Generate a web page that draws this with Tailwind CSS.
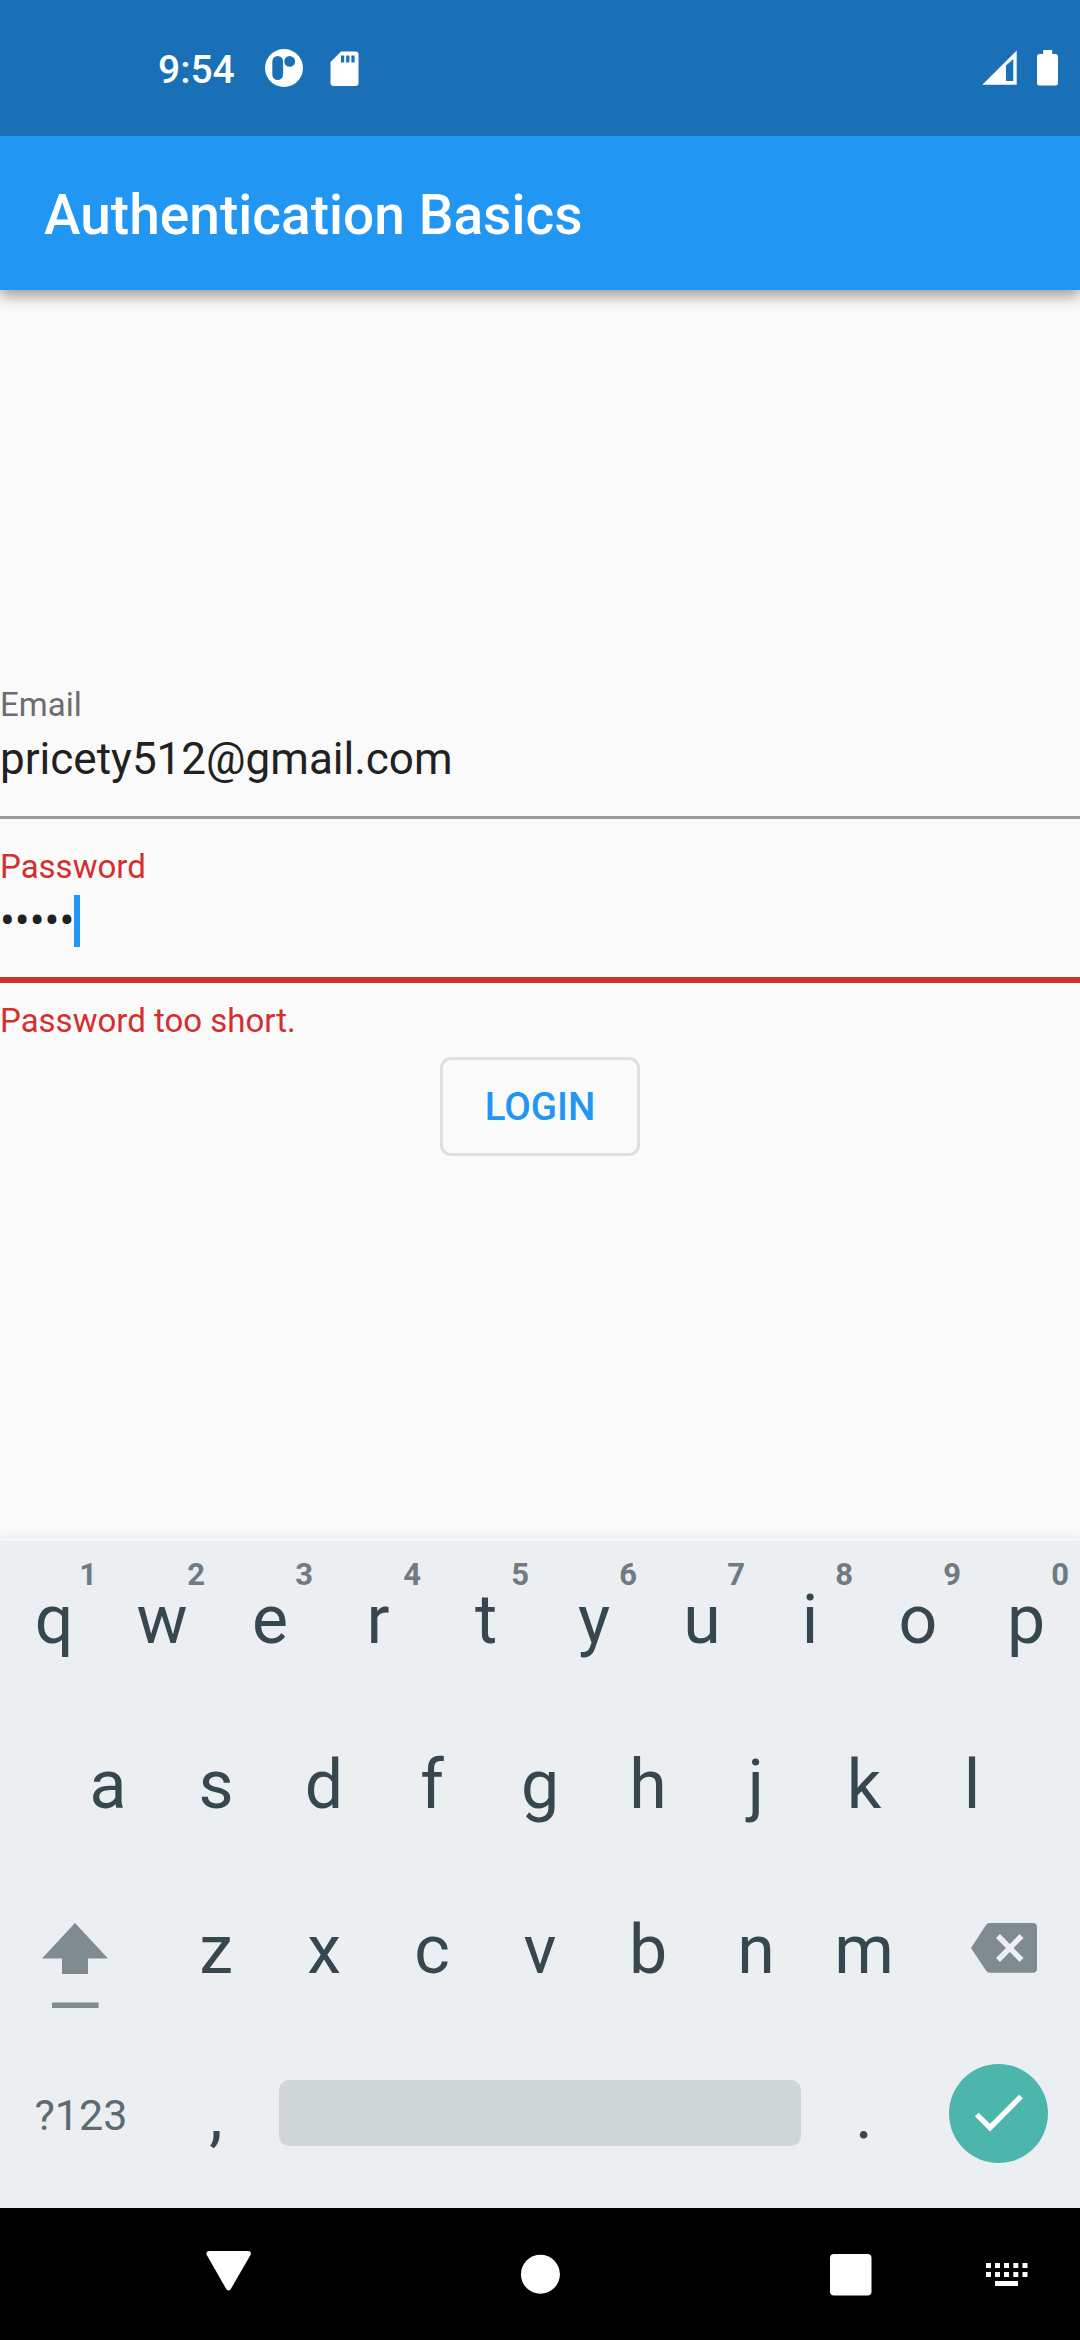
<!DOCTYPE html>
<html lang="en">
<head>
<meta charset="utf-8">
<title>Authentication Basics</title>
<script src="https://cdn.jsdelivr.net/npm/@tailwindcss/browser@4"></script>
</head>
<body class="w-[1080px] h-[2340px] flex flex-col overflow-hidden bg-[#fafafa] font-['Roboto',sans-serif]">
  <!-- Status bar -->
  <header class="relative z-10 h-[136px] shrink-0 bg-[#1a70b6] flex items-center text-white">
    <span class="ml-[158px] mt-[4px] w-[106px] text-[39px] leading-[46px] font-medium">9:54</span>
    <svg class="w-[40px] h-[40px]" viewBox="0 0 40 40"><path fill="#fff" fill-rule="evenodd" d="M20 1a19 19 0 1 1 0 38a19 19 0 1 1 0-38zM13.700 8a5.400 5.400 0 0 0-5.400 5.400v13.200a5.400 5.400 0 0 0 10.800 0V13.400A5.400 5.400 0 0 0 13.700 8zM25.700 8a5.400 5.400 0 1 0 0 10.800a5.400 5.400 0 1 0 0-10.800z"/></svg>
    <svg class="ml-[26px] mt-px w-[30px] h-[36px]" viewBox="0 0 30 36"><path fill="#fff" fill-rule="evenodd" d="M11 .5H25.500a3 3 0 0 1 3 3v28.500a3 3 0 0 1-3 3H3.500a3 3 0 0 1-3-3V11zM11 4.500v7h3.200v-7zM16.200 4.500v7h3.200v-7zM21.400 4.500v7h3.200v-7z"/></svg>
    <svg class="ml-auto w-[36px] h-[36px]" viewBox="0 0 36 36"><path fill="#fff" fill-rule="evenodd" d="M.3 34.800H34.700V.5zM24 31V15.500L31.300 9V31z"/></svg>
    <svg class="ml-[19px] mr-[21px] w-[22px] h-[36px]" viewBox="0 0 22 36"><path fill="#fff" d="M6.200 0h9v4H18.500a2.500 2.500 0 0 1 2.500 2.500V33a2.500 2.500 0 0 1-2.500 2.500H2.500A2.500 2.500 0 0 1 0 33V6.500A2.500 2.500 0 0 1 2.500 4h3.700z"/></svg>
  </header>

  <!-- App bar -->
  <div class="h-[154px] shrink-0 bg-[#2196f3] pl-[44px] pt-[3px] flex items-center shadow-[0_6px_14px_rgba(0,0,0,0.38)]">
    <h1 class="text-[55px] leading-[64px] font-medium tracking-[0.03px] text-white whitespace-nowrap">Authentication Basics</h1>
  </div>

  <!-- Form -->
  <main class="flex-1 flex flex-col">
    <label class="mt-[396px] text-[33px] leading-[38px] text-[#6d6d6d]">Email</label>
    <div class="mt-[9px] text-[44px] leading-[52px] text-[#212121]">pricety512@gmail.com</div>
    <div class="mt-[31px] h-[3px] bg-[#9b9b9b]"></div>
    <label class="mt-[29px] text-[33px] leading-[38px] text-[#d32f2f]">Password</label>
    <div class="mt-[9px] h-[52px] flex text-[44px] leading-[52px] text-[#212121]">
      <span class="w-[74px]">•••••</span><span class="w-[5.5px] h-[52px] bg-[#2196f3]"></span>
    </div>
    <div class="mt-[30px] h-[6px] bg-[#d32f2f]"></div>
    <div class="mt-[19px] text-[33px] leading-[38px] text-[#d32f2f]">Password too short.</div>
    <button class="mt-[17px] self-center w-[200px] h-[99px] rounded-[11px] border-[3px] border-[#dedede] text-[38.5px] leading-[46px] font-medium text-[#2196f3]">LOGIN</button>
  </main>

  <!-- Keyboard -->
  <section class="h-[670px] shrink-0 bg-[#ebeff2] shadow-[0_0_9px_rgba(0,0,0,0.10),inset_0_3px_0_#f4f6f8] text-[68px] leading-[80px] text-[#37474f] flex flex-col">
    <div id="row1" class="h-[165px] grid grid-cols-10"></div>
    <div id="row2" class="h-[165px] px-[54px] grid grid-cols-9"></div>
    <div class="h-[165px] flex">
      <div class="w-[162px]"><svg class="w-[162px] h-[165px]" viewBox="0 0 162 165"><path fill="#808b90" d="M75 55l33 35.500H88V106H62V90.500H42zM52 134.500h46.500v5.500H52z"/></svg></div>
      <div id="row3" class="w-[756px] grid grid-cols-7"></div>
      <div class="w-[162px]"><svg class="w-[162px] h-[165px]" viewBox="0 0 162 165"><path fill="#808b90" d="M69.500 55H115a4 4 0 0 1 4 4v41.800a4 4 0 0 1-4 4H71.500q-2 0-3.400-2L53 80l15-23q1.300-2 3.500-2z"/><path stroke="#ebeff2" stroke-width="5.500" fill="none" d="M80 68l23.500 24M103.500 68L80 92"/></svg></div>
    </div>
    <div class="h-[165px] pb-[2px] flex items-center">
      <span class="w-[162px] pl-[34.500px] text-[43px] leading-[50px] text-[#5b6b72]">?123</span>
      <span class="w-[108px] text-center">,</span>
      <span class="ml-[9px] mb-[3px] w-[522px] h-[66px] rounded-[10px] bg-[#d0d5d8]"></span>
      <span class="ml-[9px] w-[108px] text-center">.</span>
      <svg class="ml-[31px] mb-[2px] w-[99px] h-[99px]" viewBox="0 0 99 99"><circle cx="49.500" cy="49.500" r="49.500" fill="#4db6ac"/><path fill="none" stroke="#fff" stroke-width="5.300" d="M27.800 50.500L41 63.700L72 32.500"/></svg>
    </div>
  </section>

  <!-- Navigation bar -->
  <nav class="h-[132px] shrink-0 bg-black">
    <svg class="w-[1080px] h-[132px]" viewBox="0 0 1080 132" fill="#fff">
      <path d="M209 43h39.500q3.500.5 2 4L230.800 81q-2.300 3-4.600 0L206.800 47q-1.500-3.500 2.200-4z"/>
      <circle cx="540.400" cy="66.300" r="19.500"/>
      <rect x="830" y="46" width="41.500" height="41.500" rx="4"/>
      <path d="M986 55h5v5h-5zM995 55h5v5h-5zM1004 55h5v5h-5zM1013.300 55h5v5h-5zM1022.500 55h5v5h-5zM986 64h5v5h-5zM995 64h5v5h-5zM1004 64h5v5h-5zM1013.300 64h5v5h-5zM1022.500 64h5v5h-5zM995 73h23v5h-23z"/>
    </svg>
  </nav>

  <script>
    const key = (c, hint) => `<div class="relative pb-[2px] flex items-center justify-center">${c}${hint ? `<span class="absolute right-[11px] top-[19px] text-[31px] leading-[36px] font-bold text-[#6f7b80]">${hint}</span>` : ''}</div>`;
    document.getElementById('row1').innerHTML = [...'qwertyuiop'].map((c, i) => key(c, '1234567890'[i])).join('');
    document.getElementById('row2').innerHTML = [...'asdfghjkl'].map(c => key(c)).join('');
    document.getElementById('row3').innerHTML = [...'zxcvbnm'].map(c => key(c)).join('');
  </script>
</body>
</html>
